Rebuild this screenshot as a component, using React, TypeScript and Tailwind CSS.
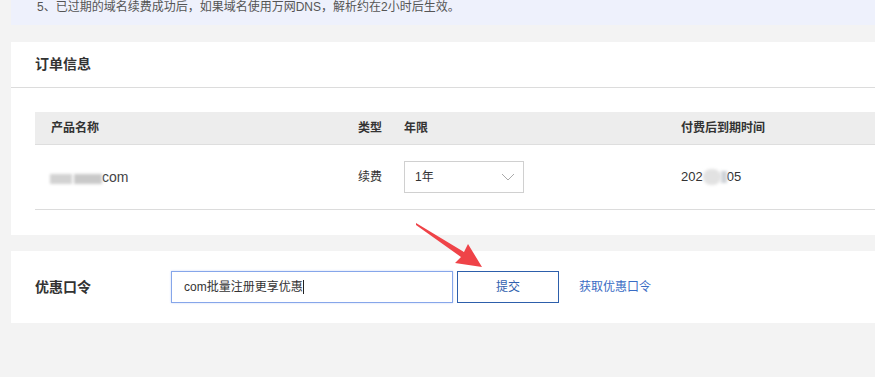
import React from 'react';

const font = { fontFamily: '"Liberation Sans", "Noto Sans CJK SC", sans-serif' };

const Blur: React.FC<{ className?: string }> = ({ className }) => (
  <span className={`inline-block bg-[#c9c9c9] blur-[1.5px] ${className ?? ''}`} />
);

export default function App() {
  return (
    <div style={font} className="relative w-[875px] h-[377px] overflow-hidden bg-[#f3f3f3] text-[#333]">
      {/* notice tail */}
      <div className="ml-[11px] h-[25px] bg-[#eef1fc] pl-[26px]">
        <p className="text-[12px] leading-[14px] text-[#555]">
          5、已过期的域名续费成功后，如果域名使用万网DNS，解析约在2小时后生效。
        </p>
      </div>

      {/* order info */}
      <div className="ml-[11px] mt-[17px] w-[900px] bg-white pb-[25px]">
        <div className="h-[46px] border-b border-[#dcdcdc] pl-[24px] flex items-center">
          <h2 className="text-[14px] font-bold">订单信息</h2>
        </div>
        <div className="ml-[24px] mt-[24px]">
          <div className="h-[33px] bg-[#ededed] border-b border-[#dedede] flex items-center text-[12px] font-bold">
            <span className="w-[323px] pl-[16px]">产品名称</span>
            <span className="w-[46px]">类型</span>
            <span className="w-[277px]">年限</span>
            <span>付费后到期时间</span>
          </div>
          <div className="h-[65px] border-b border-[#dcdcdc] flex items-center text-[12px]">
            <span className="w-[323px] pl-[15px] flex items-center">
              <Blur className="w-[22px] h-[10px] mt-[3px] bg-[#d2d2d2]" />
              <Blur className="w-[28px] h-[10px] mt-[3px] ml-[2px] bg-[#c6c6c6]" />
              <span className="text-[14px] text-[#444]">com</span>
            </span>
            <span className="w-[46px]">续费</span>
            <span className="w-[277px]">
              <span className="w-[120px] h-[32px] border border-[#d0d0d0] flex items-center justify-between pl-[10px] pr-[8px] text-[12px]">
                <span>1年</span>
                <svg width="14" height="9" viewBox="0 0 14 9" className="text-[#aaa]">
                  <polyline points="1,1 7,7 13,1" fill="none" stroke="currentColor" strokeWidth="1" />
                </svg>
              </span>
            </span>
            <span className="flex items-center text-[13px]">
              202
              <Blur className="w-[18px] h-[16px] rounded-full bg-[#e2e2e2]" />
              <Blur className="w-[6px] h-[12px] bg-[#cfd3d8]" />
              05
            </span>
          </div>
        </div>
      </div>

      {/* coupon */}
      <div className="ml-[11px] mt-[16px] w-[900px] h-[72px] bg-white flex items-center pl-[24px]">
        <span className="w-[136px] text-[14px] font-bold">优惠口令</span>
        <div className="w-[282px] h-[32px] border border-[#86a6ea] shadow-[0_0_2px_#c9d6f5] flex items-center pl-[12px] text-[12px] text-[#333]">
          com批量注册更享优惠
          <span className="inline-block w-px h-[14px] bg-[#222]" />
        </div>
        <button className="ml-[4px] w-[102px] h-[32px] border border-[#2d5fab] text-[12px] text-[#2f5fae] bg-white">
          提交
        </button>
        <a className="ml-[20px] text-[12px] text-[#3a6cc4]">获取优惠口令</a>
      </div>

      {/* annotation arrow */}
      <svg className="absolute left-0 top-0 pointer-events-none" width="875" height="377">
        <polygon
          points="416,223 464,252 468,244 482,267 455,263 461,257 416,225"
          fill="#ef4348"
        />
      </svg>
    </div>
  );
}
